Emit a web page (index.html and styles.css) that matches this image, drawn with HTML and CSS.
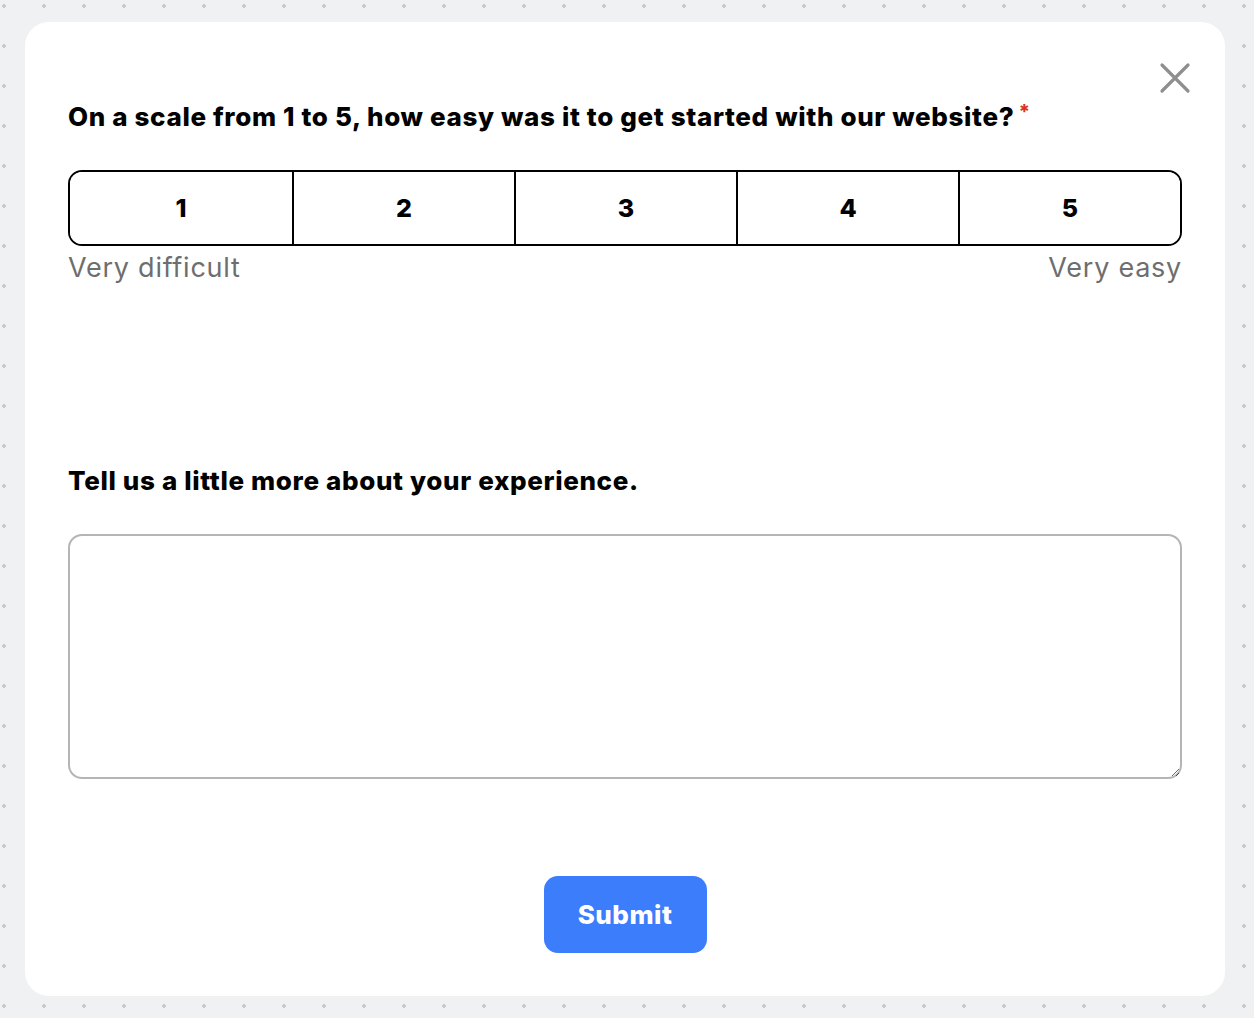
FILE: index.html
```html
<!DOCTYPE html>
<html lang="en">
<head>
<meta charset="utf-8">
<title>Survey</title>
<link rel="stylesheet" href="styles.css">
</head>
<body>
<div class="card">
  <button class="close" aria-label="Close">
    <svg width="32" height="32" viewBox="0 0 32 32"><path d="M3 3 L29 29 M29 3 L3 29" stroke="#8e8e8e" stroke-width="3.2" stroke-linecap="round" fill="none"/></svg>
  </button>
  <h2 class="question">On a scale from 1 to 5, how easy was it to get started with our website?<span class="req">*</span></h2>
  <div class="scale">
    <button class="cell">1</button>
    <button class="cell">2</button>
    <button class="cell">3</button>
    <button class="cell">4</button>
    <button class="cell">5</button>
  </div>
  <div class="labels"><span>Very difficult</span><span>Very easy</span></div>
  <h2 class="question q2">Tell us a little more about your experience.</h2>
  <textarea class="answer"></textarea>
  <div class="actions"><button class="submit">Submit</button></div>
</div>
</body>
</html>
```
FILE: styles.css
```css
html, body { margin: 0; padding: 0; }
body {
  width: 1254px;
  height: 1018px;
  box-sizing: border-box;
  padding: 22px 29px 22px 25px;
  background-color: #f0f1f3;
  background-image: radial-gradient(circle, #c9cacd 1.6px, transparent 2px);
  background-size: 40px 40px;
  background-position: -16px -14px;
  font-family: Inter, "Noto Sans", sans-serif;
  overflow: hidden;
}
.card {
  position: relative;
  box-sizing: border-box;
  height: 974px;
  background: #fff;
  border-radius: 24px;
  padding: 77px 43px 0 43px;
  display: flex;
  flex-direction: column;
}
.close {
  position: absolute;
  top: 40px;
  right: 34px;
  border: 0;
  background: none;
  padding: 0;
  width: 32px;
  height: 32px;
  cursor: pointer;
}
.close svg { display: block; }
.question {
  margin: 0;
  font-size: 26px;
  font-weight: 800;
  letter-spacing: 0.65px;
  line-height: 36px;
  color: #000;
}
.req {
  color: #d9341c;
  font-size: 20px;
  font-weight: 800;
  line-height: 0;
  vertical-align: 7px;
  margin-left: 4px;
}
.scale {
  margin-top: 35px;
  display: grid;
  grid-template-columns: repeat(5, 1fr);
  border: 2px solid #000;
  border-radius: 14px;
  overflow: hidden;
  height: 76px;
  box-sizing: border-box;
}
.cell {
  border: 0;
  border-left: 2px solid #000;
  background: #fff;
  font-family: inherit;
  font-size: 25px;
  font-weight: 800;
  color: #000;
  padding: 0;
}
.cell:first-child { border-left: 0; }
.labels {
  display: flex;
  justify-content: space-between;
  color: #6e6e6e;
  font-size: 27px;
  letter-spacing: 0.75px;
  line-height: 44px;
}
.q2 { margin-top: 173px; }
.answer {
  margin-top: 35px;
  height: 245px;
  box-sizing: border-box;
  border: 2px solid #b5b5b5;
  border-radius: 14px;
  resize: vertical;
  width: 100%;
  font-family: inherit;
}
.actions {
  display: flex;
  justify-content: center;
  margin-top: 97px;
}
.submit {
  width: 163px;
  height: 77px;
  border: 0;
  border-radius: 14px;
  background: #3b7dfb;
  color: #fff;
  font-family: inherit;
  font-size: 26px;
  font-weight: 800;
  letter-spacing: 0.5px;
  cursor: pointer;
}
```
